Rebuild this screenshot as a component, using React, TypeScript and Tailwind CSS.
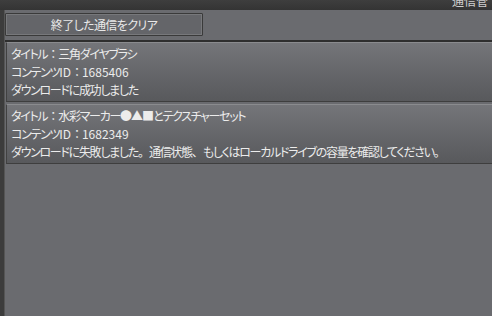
function JText({ t }: { t: string }) {
  const parts = t.split(/([：。、●▲■]|[A-Za-z0-9]+)/).filter((p) => p !== "");
  return (
    <>
      {parts.map((p, i) => {
        if (/^[：。、●▲■]$/.test(p))
          return (
            <span key={i} className="[font-feature-settings:normal] tracking-[-1px]">{p}</span>
          );
        if (/^[A-Za-z0-9]+$/.test(p))
          return (
            <span key={i} className="tracking-normal">{p}</span>
          );
        return (
          <span key={i} className="tracking-[-1.3px]">{p}</span>
        );
      })}
    </>
  );
}

export default function App() {
  const font = { fontFamily: '"Noto Sans CJK JP", "Noto Sans", sans-serif' };
  const cards = [
    ["タイトル：三角ダイヤブラシ", "コンテンツID：1685406", "ダウンロードに成功しました"],
    [
      "タイトル：水彩マーカー●▲■とテクスチャーセット",
      "コンテンツID：1682349",
      "ダウンロードに失敗しました。通信状態、もしくはローカルドライブの容量を確認してください。",
    ],
  ];
  return (
    <div className="w-[492px] h-[316px] overflow-hidden flex flex-col bg-[#6a6b6f]" style={font}>
      <div className="h-[10px] shrink-0 bg-gradient-to-b from-[#3e3e3e] to-[#343434] flex justify-end overflow-hidden">
        <span className="text-[12px] leading-[12px] -mt-[5px] mr-[4px] text-[#cfcfcf]">通信管</span>
      </div>
      <div className="flex flex-1">
        <div className="w-[5px] shrink-0 bg-[#3c3c3c] border-r border-[#555]" />
        <div className="flex-1 flex flex-col">
          <div className="h-[30px] pt-[3px] shrink-0">
            <div className="w-[198px] h-[23px] border border-[#3a3a3a] rounded-[1px] bg-[#646569] shadow-[inset_1px_1px_0_#77787b,inset_-1px_-1px_0_#77787b] flex items-center justify-center text-[12px] text-[#e8e8e8] [font-feature-settings:'palt'] tracking-[-0.6px]">
              終了した通信をクリア
            </div>
          </div>
          <div className="h-[2px] bg-[#2e2e2e] shrink-0" />
          <div className="flex flex-col gap-[2px] pl-[1px]">
            {cards.map((c, i) => (
              <div
                key={i}
                className="border-l border-t border-b border-l-[#414141] border-t-[#8a8b8e] border-b-[#3e3e3e] bg-gradient-to-b from-[#747579] to-[#58595c] pl-[4px] pt-[2px] pb-[2px] text-[12px] leading-[18px] text-[#ececec] [font-feature-settings:'palt']"
              >
                {c.map((t, j) => (
                  <div key={j} className="whitespace-nowrap">
                    <JText t={t} />
                  </div>
                ))}
              </div>
            ))}
          </div>
        </div>
      </div>
    </div>
  );
}
